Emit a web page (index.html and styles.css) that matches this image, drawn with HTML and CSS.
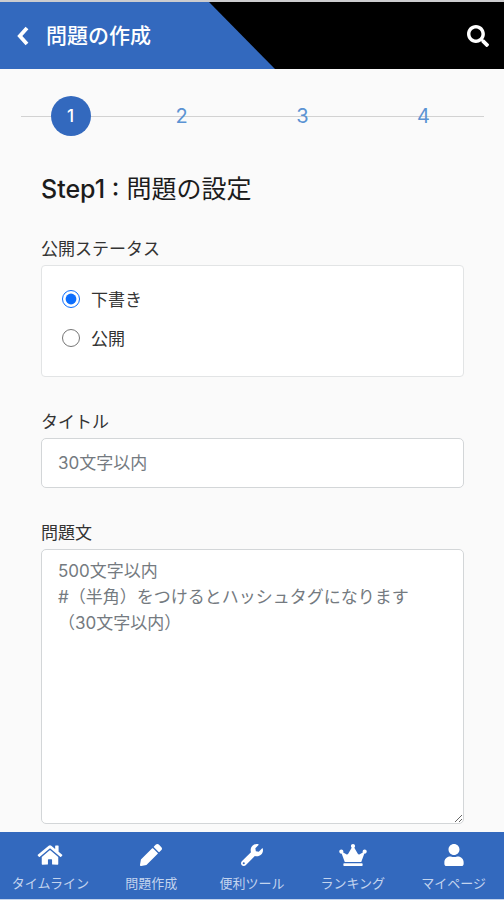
FILE: index.html
```html
<!DOCTYPE html>
<html lang="ja">
<head>
<meta charset="utf-8">
<meta name="viewport" content="width=device-width, initial-scale=1">
<title>問題の作成</title>
<link rel="stylesheet" href="styles.css">
</head>
<body>
<header class="topbar">
  <div class="topbar-title">
    <button class="icon-button" type="button" aria-label="戻る">
      <svg class="icon-back" viewBox="0 0 12 20"><path d="M10 2 2.800 10 10 18" fill="none" stroke="currentColor" stroke-width="3.800"/></svg>
    </button>
    <h1 class="page-title">問題の作成</h1>
  </div>
  <button class="icon-button" type="button" aria-label="検索">
    <svg class="icon-search" viewBox="0 0 512 512"><path fill="currentColor" d="M505 442.700 405.300 343c-4.500-4.500-10.600-7-17-7H372c27.600-35.300 44-79.700 44-128C416 93.100 322.900 0 208 0S0 93.100 0 208s93.100 208 208 208c48.300 0 92.700-16.400 128-44v16.300c0 6.400 2.500 12.500 7 17l99.700 99.700c9.400 9.400 24.600 9.400 33.900 0l28.300-28.300c9.400-9.400 9.400-24.600.1-34zM208 336c-70.700 0-128-57.200-128-128 0-70.700 57.200-128 128-128 70.700 0 128 57.200 128 128 0 70.700-57.200 128-128 128z"/></svg>
  </button>
</header>

<main class="content">
  <ol class="steps">
    <li class="step step-current" aria-current="step">1</li>
    <li class="step">2</li>
    <li class="step">3</li>
    <li class="step">4</li>
  </ol>

  <form class="form">
    <h2 class="form-title"><span class="form-step">Step1 :</span> 問題の設定</h2>

    <fieldset class="field">
      <legend class="label">公開ステータス</legend>
      <div class="card">
        <label class="option"><input class="radio" type="radio" name="status" value="draft" checked>下書き</label>
        <label class="option"><input class="radio" type="radio" name="status" value="public">公開</label>
      </div>
    </fieldset>

    <div class="field">
      <label class="label" for="title">タイトル</label>
      <input class="control" id="title" type="text" placeholder="30文字以内">
    </div>

    <div class="field">
      <label class="label" for="body">問題文</label>
      <textarea class="control control-area" id="body" placeholder="500文字以内&#10;#（半角）をつけるとハッシュタグになります&#10;（30文字以内）"></textarea>
    </div>
  </form>
</main>

<nav class="tabbar">
  <a class="tab" href="#timeline">
    <svg class="tab-icon" viewBox="0 0 576 512"><path fill="currentColor" d="M280.400 148.300 96 300.100V464a16 16 0 0 0 16 16l112.100-.3a16 16 0 0 0 15.900-16V368a16 16 0 0 1 16-16h64a16 16 0 0 1 16 16v95.600a16 16 0 0 0 16 16.100L464 480a16 16 0 0 0 16-16V300L295.700 148.300a12.200 12.200 0 0 0-15.300 0zM571.600 251.500 488 182.600V44.100a12 12 0 0 0-12-12h-56a12 12 0 0 0-12 12v72.600L318.500 43a48 48 0 0 0-61 0L4.300 251.500a12 12 0 0 0-1.600 16.900l25.500 31a12 12 0 0 0 16.900 1.600l235.300-193.700a12.200 12.200 0 0 1 15.300 0L530.900 301a12 12 0 0 0 16.900-1.600l25.500-31a12 12 0 0 0-1.700-16.900z"/></svg>
    <span>タイムライン</span>
  </a>
  <a class="tab" href="#create">
    <svg class="tab-icon" viewBox="0 0 512 512"><path fill="currentColor" d="M497.900 142.100l-46.100 46.100c-4.700 4.700-12.300 4.700-17 0l-111-111c-4.700-4.700-4.700-12.300 0-17l46.100-46.100c18.700-18.700 49.100-18.700 67.900 0l60.100 60.100c18.800 18.700 18.800 49.100 0 67.900zM284.200 99.800 21.600 362.400.4 483.900c-2.900 16.400 11.400 30.600 27.800 27.800l121.500-21.300 262.600-262.600c4.700-4.700 4.700-12.300 0-17l-111-111c-4.800-4.700-12.400-4.700-17.100 0z"/></svg>
    <span>問題作成</span>
  </a>
  <a class="tab" href="#tools">
    <svg class="tab-icon" viewBox="0 0 512 512"><path fill="currentColor" fill-rule="evenodd" d="M507.700 109.100c-2.200-9-13.500-12.100-20.100-5.500l-74.400 74.400-67.900-11.300L334 98.900l74.400-74.400c6.600-6.600 3.400-17.900-5.700-20.200-47.400-11.700-99.600.9-136.600 37.900-39.600 39.600-50.500 97.100-34.100 147.200L18.700 402.800c-25 25-25 65.500 0 90.500s65.500 25 90.500 0l213.200-213.200c50.100 16.700 107.500 5.700 147.400-34.200 37.100-37.100 49.700-89.300 37.900-136.800zM64 472a24 24 0 1 1 0-48 24 24 0 0 1 0 48z"/></svg>
    <span>便利ツール</span>
  </a>
  <a class="tab" href="#ranking">
    <svg class="tab-icon" viewBox="0 0 640 512"><path fill="currentColor" d="M528 448H112c-8.800 0-16 7.200-16 16v32c0 8.800 7.200 16 16 16h416c8.800 0 16-7.200 16-16v-32c0-8.800-7.200-16-16-16zm64-320c-26.500 0-48 21.500-48 48 0 7.100 1.600 13.700 4.400 19.800L476 239.200c-15.400 9.200-35.300 4-44.200-11.600L350.300 85C361 76.200 368 63 368 48c0-26.500-21.500-48-48-48s-48 21.500-48 48c0 15 7 28.200 17.700 37l-81.500 142.600c-8.900 15.600-28.900 20.800-44.200 11.600l-72.300-43.400c2.700-6 4.400-12.700 4.400-19.800 0-26.500-21.500-48-48-48S0 149.500 0 176s21.500 48 48 48c2.600 0 5.200-.4 7.700-.8L128 416h384l72.300-192.800c2.500.4 5.100.8 7.700.8 26.500 0 48-21.500 48-48s-21.500-48-48-48z"/></svg>
    <span>ランキング</span>
  </a>
  <a class="tab" href="#mypage">
    <svg class="tab-icon" viewBox="0 0 448 512"><path fill="currentColor" d="M224 256c70.700 0 128-57.300 128-128S294.700 0 224 0 96 57.300 96 128s57.300 128 128 128zm89.600 32h-16.700a174 174 0 0 1-145.800 0h-16.700C60.200 288 0 348.200 0 422.400V464c0 26.500 21.500 48 48 48h352c26.500 0 48-21.500 48-48v-41.600c0-74.200-60.200-134.400-134.400-134.400z"/></svg>
    <span>マイページ</span>
  </a>
</nav>
</body>
</html>
```
FILE: styles.css
```css
* {
  box-sizing: border-box;
}

body {
  display: flex;
  flex-direction: column;
  min-height: 100vh;
  margin: 0;
  border-top: 2px solid #cccccf;
  background: #fafafa;
  color: #333;
  font: 17px/26px Inter, "Noto Sans CJK JP", sans-serif;
}

.topbar {
  display: flex;
  align-items: center;
  justify-content: space-between;
  height: 67px;
  padding-right: 15px;
  background: #000;
  color: #fff;
}

.topbar-title {
  display: flex;
  align-items: center;
  gap: 17px;
  width: 275px;
  height: 100%;
  padding-left: 17px;
  background: #3369be;
  clip-path: polygon(0 0, 209px 0, 100% 100%, 0 100%);
}

.icon-button {
  display: flex;
  padding: 0;
  border: 0;
  background: none;
  color: #fff;
  cursor: pointer;
}

.icon-back {
  width: 12px;
  height: 20px;
}

.icon-search {
  width: 22px;
  height: 22px;
}

.page-title {
  margin: 0;
  font-size: 21px;
  font-weight: 500;
  line-height: 30px;
}

.content {
  flex: 1;
  padding: 27px 20px 8px;
}

.steps {
  display: grid;
  grid-template-columns: repeat(4, 1fr);
  align-items: center;
  margin: 0 0 38px -20px;
  padding: 0;
  background: linear-gradient(#d2d2d2, #d2d2d2) 21px center / 100% 1px no-repeat;
  color: #5b93d3;
  font-size: 20px;
  list-style: none;
}

.step {
  justify-self: center;
  line-height: 40px;
}

.step-current {
  width: 40px;
  margin-left: 20px;
  border-radius: 50%;
  background: #3369be;
  color: #fff;
  font-size: 17px;
  font-weight: 500;
  text-align: center;
}

.form {
  display: flex;
  flex-direction: column;
  gap: 32px;
  padding: 0 20px 0 21px;
}

.form-title {
  margin: 0;
  color: #1c1c1c;
  font-size: 25px;
  font-weight: 400;
  line-height: 30px;
}

.form-step {
  font-weight: 500;
}

.field {
  display: flex;
  flex-direction: column;
  gap: 3px;
  min-width: 0;
  margin: 0;
  padding: 0;
  border: 0;
}

.label {
  padding: 0;
}

legend.label {
  margin-bottom: 3px;
}

.card {
  display: flex;
  flex-direction: column;
  gap: 13px;
  padding: 21px 20px 24px;
  border: 1px solid #e2e4e5;
  border-radius: 4px;
  background: #fff;
}

.option {
  display: flex;
  align-items: flex-start;
  gap: 11px;
}

.radio {
  width: 18px;
  height: 18px;
  margin: 3px 0 0;
  accent-color: #0d6efd;
}

.control {
  width: 100%;
  height: 50px;
  padding: 0 16px;
  border: 1px solid #d3d6d8;
  border-radius: 5px;
  background: #fff;
  color: #333;
  font: inherit;
}

.control::placeholder {
  color: #747a80;
  opacity: 1;
}

.control-area {
  display: block;
  height: 275px;
  padding: 8px 16px;
  resize: vertical;
}

.tabbar {
  position: sticky;
  bottom: 0;
  display: grid;
  grid-template-columns: repeat(5, 1fr);
  border-bottom: 1px solid #c5d4ec;
  background: #3369be;
}

.tab {
  display: flex;
  flex-direction: column;
  align-items: center;
  gap: 8px;
  padding: 12px 0 6px;
  color: #c3d4ee;
  font-size: 13px;
  line-height: 19px;
  text-decoration: none;
}

.tab-icon {
  width: 28px;
  height: 22px;
  color: #fff;
}
```
